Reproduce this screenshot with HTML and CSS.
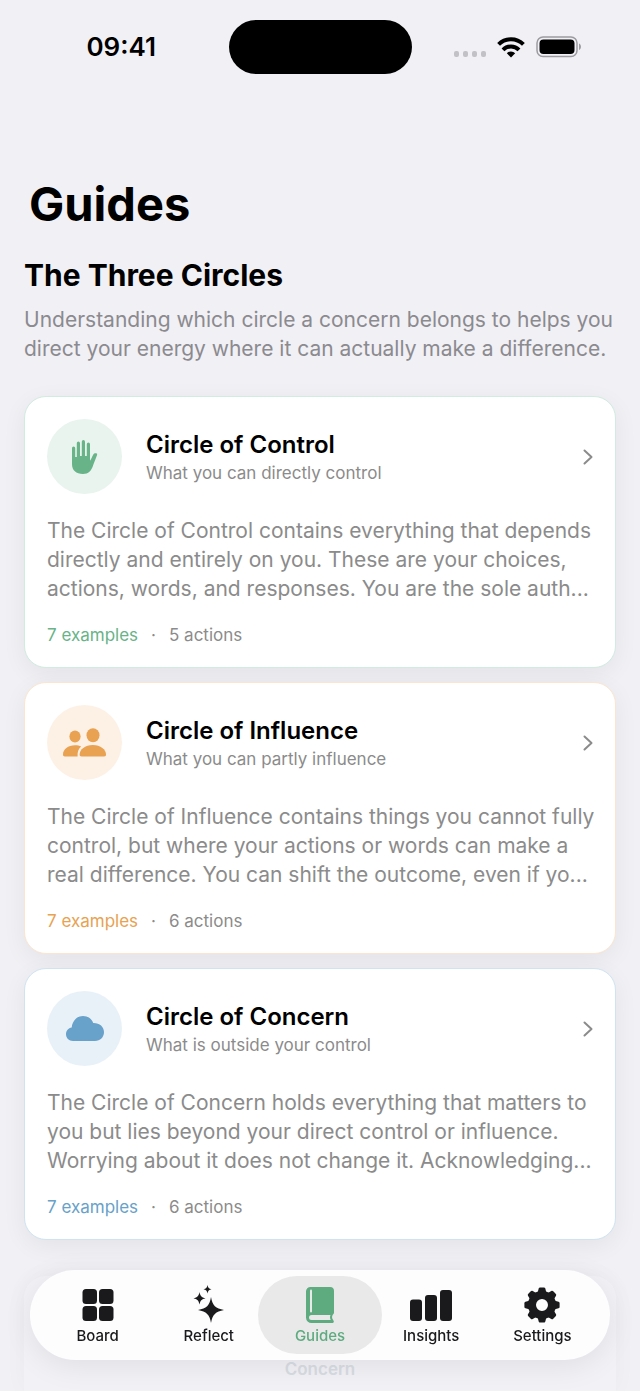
FILE: index.html
```html
<!DOCTYPE html>
<html lang="en">
<head>
    <meta charset="UTF-8">
    <meta name="viewport" content="width=device-width, initial-scale=1.0">
    <title>Guides</title>
    <link rel="stylesheet" href="styles.css">
</head>
<body>
    <header class="status-bar">
        <span class="time">09:41</span>
        <div class="island"></div>
        <div class="status-icons">
            <svg class="dots" width="32" height="6" viewBox="0 0 32 6" fill="#c2c1c6">
                <rect x="0" width="5" height="6" rx="2"/>
                <rect x="9" width="5" height="6" rx="2"/>
                <rect x="18" width="5" height="6" rx="2"/>
                <rect x="27" width="5" height="6" rx="2"/>
            </svg>
            <svg width="28" height="21" viewBox="0 0 28 21" fill="none" stroke="#000" stroke-width="4">
                <path d="M1.6 7.4a17.6 17.6 0 0 1 24.8 0"/>
                <path d="M6 12.8a11.400 11.400 0 0 1 16 0"/>
                <path d="M14 20.400l-4.200-4.200a6 6 0 0 1 8.400 0z" fill="#000" stroke="none"/>
            </svg>
            <svg width="46" height="22" viewBox="0 0 46 22">
                <rect x="1" y="1" width="40" height="19.500" rx="6" fill="none" stroke="#9c9ba0" stroke-width="1.500"/>
                <rect x="3.500" y="3.500" width="35" height="14.500" rx="4" fill="#000"/>
                <path d="M43 7.500c2.600 1 2.600 5.500 0 6.500z" fill="#9c9ba0"/>
            </svg>
        </div>
    </header>

    <main class="content">
        <h1>Guides</h1>
        <h2>The Three Circles</h2>
        <p class="intro">Understanding which circle a concern belongs to helps you direct your energy where it can actually make a difference.</p>

        <div class="cards">
            <a class="card control" href="#control">
                <div class="card-header">
                    <div class="icon">
                        <svg width="26" height="34" viewBox="0 0 26 34" fill="currentColor">
                            <path d="M0 8a1.600 1.600 0 0 1 3.200 0v9h1.600V3.200a1.600 1.600 0 0 1 3.200 0V16h1.800V1.700a1.600 1.600 0 0 1 3.200 0V16h1.800V4.200a1.600 1.600 0 0 1 3.200 0v16.600c1.200-1 2-4.200 3.300-6.200.8-1.400 2.200-1.700 3.400-1 .7.400.5 1.200.2 1.900l-3.600 9.300C19.500 31 16.300 34 11 34 4 34 0 30.300 0 24z"/>
                        </svg>
                    </div>
                    <div class="card-title">
                        <h3>Circle of Control</h3>
                        <span>What you can directly control</span>
                    </div>
                    <svg class="chevron" width="10" height="16" viewBox="0 0 10 16"><path d="M1.500 1.500L8.500 8l-7 6.500"/></svg>
                </div>
                <p>The Circle of Control contains everything that depends directly and entirely on you. These are your choices, actions, words, and responses. You are the sole auth...</p>
                <div class="meta"><span class="examples">7 examples</span><span>·</span><span>5 actions</span></div>
            </a>

            <a class="card influence" href="#influence">
                <div class="card-header">
                    <div class="icon">
                        <svg width="43" height="29" viewBox="0 0 43 29" fill="currentColor">
                            <ellipse cx="12" cy="8.500" rx="5.600" ry="6"/>
                            <ellipse cx="30" cy="7.200" rx="6.500" ry="7"/>
                            <path d="M2 28.500C.4 28.500 0 27.500 0 26.500 0 21.500 5 17.300 12 17.300c2.500 0 4.500.4 6.200 1.300-2.500 2-4 5.400-3.600 9.900z"/>
                            <path d="M18.600 28.500c-1.600 0-2-1-2-2 0-5 5.400-9.500 13.200-9.500S43 21.500 43 26.500c0 1-.4 2-2 2z"/>
                        </svg>
                    </div>
                    <div class="card-title">
                        <h3>Circle of Influence</h3>
                        <span>What you can partly influence</span>
                    </div>
                    <svg class="chevron" width="10" height="16" viewBox="0 0 10 16"><path d="M1.500 1.500L8.500 8l-7 6.500"/></svg>
                </div>
                <p>The Circle of Influence contains things you cannot fully control, but where your actions or words can make a real difference. You can shift the outcome, even if yo...</p>
                <div class="meta"><span class="examples">7 examples</span><span>·</span><span>6 actions</span></div>
            </a>

            <a class="card concern" href="#concern">
                <div class="card-header">
                    <div class="icon">
                        <svg width="38" height="25" viewBox="0 0 38 25" fill="currentColor">
                            <path d="M7 25C2.800 25 0 22 0 18.300c0-3.400 2.300-6.200 5.700-6.700C6.300 4.700 11 0 17 0c4.700 0 8.500 2.600 10.200 6.900C33.500 6.700 38 10.700 38 16c0 5.200-3.800 9-9 9z"/>
                        </svg>
                    </div>
                    <div class="card-title">
                        <h3>Circle of Concern</h3>
                        <span>What is outside your control</span>
                    </div>
                    <svg class="chevron" width="10" height="16" viewBox="0 0 10 16"><path d="M1.500 1.500L8.500 8l-7 6.500"/></svg>
                </div>
                <p>The Circle of Concern holds everything that matters to you but lies beyond your direct control or influence. Worrying about it does not change it. Acknowledging...</p>
                <div class="meta"><span class="examples">7 examples</span><span>·</span><span>6 actions</span></div>
            </a>
        </div>

        <div class="next-card">Concern</div>
    </main>

    <nav class="tab-bar">
        <a class="tab" href="#board">
            <svg width="32" height="36" viewBox="0 0 32 36" fill="currentColor">
                <rect x="0.500" y="2" width="14.500" height="15" rx="3.500"/>
                <rect x="17" y="2" width="14.500" height="15" rx="3.500"/>
                <rect x="0.500" y="19" width="14.500" height="15" rx="3.500"/>
                <rect x="17" y="19" width="14.500" height="15" rx="3.500"/>
            </svg>
            Board
        </a>
        <a class="tab" href="#reflect">
            <svg width="32" height="38" viewBox="0 0 32 38" fill="currentColor">
                <path d="M18 12c1.500 8.500 4.500 11.500 13 13-8.500 1.500-11.500 4.500-13 13-1.500-8.500-4.500-11.500-13-13 8.500-1.500 11.500-4.500 13-13z"/>
                <path d="M6.500 7c.8 4 2 5.300 6 6.300-4 1-5.200 2.300-6 6.300-.8-4-2-5.300-6-6.300 4-1 5.200-2.300 6-6.300z"/>
                <path d="M14.500 0c.5 2.800 1.400 3.600 4 4.200-2.600.6-3.500 1.400-4 4.200-.5-2.800-1.400-3.600-4-4.200 2.600-.6 3.500-1.400 4-4.200z"/>
            </svg>
            Reflect
        </a>
        <a class="tab active" href="#guides">
            <svg width="28" height="36" viewBox="0 0 28 36">
                <path d="M4.500 0H24a4 4 0 0 1 4 4v21.500c0 1-.4 1.800-1.200 2.300-1.200 2-.9 3.700.5 5.400.9 1 .7 2.800-.8 2.800H5.500A5.500 5.500 0 0 1 0 30.500V4.500A4.500 4.500 0 0 1 4.500 0z" fill="currentColor"/>
                <path d="M5 3.500v21" stroke="#e9e9ea" stroke-width="2" stroke-linecap="round"/>
                <path d="M5.500 28H24.500c-.7 1.800-.6 3.400.2 5H5.500a2.500 2.500 0 0 1 0-5z" fill="#e9e9ea"/>
            </svg>
            Guides
        </a>
        <a class="tab" href="#insights">
            <svg width="42" height="36" viewBox="0 0 42 36" fill="currentColor">
                <rect x="0" y="12.500" width="12" height="21.500" rx="3"/>
                <rect x="15" y="8" width="12" height="26" rx="3"/>
                <rect x="30" y="3" width="12" height="31" rx="3"/>
            </svg>
            Insights
        </a>
        <a class="tab" href="#settings">
            <svg width="36" height="36" viewBox="0 0 36 36" fill="currentColor">
                <circle cx="18" cy="18" r="10" fill="none" stroke="currentColor" stroke-width="8"/>
                <g id="teeth">
                    <path id="tooth" d="M13.500 6l1.200-4.500C15 .6 15.600.4 16.300.4h3.400c.7 0 1.300.2 1.600 1.100L22.500 6z"/>
                    <use href="#tooth" transform="rotate(45 18 18)"/>
                    <use href="#tooth" transform="rotate(90 18 18)"/>
                    <use href="#tooth" transform="rotate(135 18 18)"/>
                </g>
                <use href="#teeth" transform="rotate(180 18 18)"/>
            </svg>
            Settings
        </a>
    </nav>
</body>
</html>
```
FILE: styles.css
```css
* {
    box-sizing: border-box;
}
body {
    font-family: Inter, "Liberation Sans", sans-serif;
    margin: 0;
    min-height: 100vh;
    display: flex;
    flex-direction: column;
    background-color: #f1f0f5;
    color: #000;
}
h1, h2, h3, p {
    margin: 0;
}
a {
    color: inherit;
    text-decoration: none;
}
.status-bar {
    display: grid;
    grid-template-columns: 1fr 183px 1fr;
    align-items: center;
    padding-top: 20px;
}
.time {
    font-size: 26px;
    font-weight: 600;
    line-height: 30px;
    text-align: center;
    padding-left: 14px;
}
.island {
    height: 54px;
    border-radius: 27px;
    background-color: #000;
}
.status-icons {
    display: flex;
    align-items: center;
    justify-content: center;
    gap: 11px;
    padding-right: 16px;
}
.dots {
    margin-top: 14px;
}
.content {
    flex: 1;
    display: flex;
    flex-direction: column;
    padding: 100px 24px 0;
}
h1 {
    font-size: 47px;
    line-height: 60px;
    padding-left: 5px;
}
h2 {
    font-size: 30px;
    line-height: 40px;
    margin-top: 21px;
}
.intro {
    font-size: 21px;
    line-height: 29px;
    color: #8b8a8f;
    margin-top: 10px;
}
.cards {
    display: flex;
    flex-direction: column;
    gap: 14px;
    margin-top: 33px;
}
.card {
    display: flex;
    flex-direction: column;
    gap: 22px;
    padding: 22px 22px 21px;
    border: 1px solid;
    border-radius: 22px;
    background-color: #fff;
    box-shadow: 0 6px 24px rgba(0, 0, 0, 0.06);
}
.card-header {
    display: flex;
    align-items: center;
    gap: 24px;
}
.icon {
    width: 75px;
    height: 75px;
    border-radius: 50%;
    display: flex;
    align-items: center;
    justify-content: center;
}
.card-title {
    flex: 1;
    color: #8b8b8b;
    font-size: 17px;
    line-height: 24px;
}
h3 {
    color: #000;
    font-size: 24px;
    font-weight: 600;
    line-height: 32px;
}
.chevron {
    fill: none;
    stroke: #8b8b8b;
    stroke-width: 2;
    stroke-linecap: round;
    stroke-linejoin: round;
}
.card p {
    color: #8b8b8b;
    font-size: 21px;
    line-height: 29px;
    margin-right: -10px;
}
.meta {
    display: flex;
    gap: 13px;
    color: #8b8b8b;
    font-size: 17px;
    line-height: 21px;
}
.control {
    border-color: #d0ebdf;
}
.control .icon {
    background-color: #e9f4ee;
    color: #68b388;
}
.control .examples {
    color: #68b388;
}
.influence {
    border-color: #fae6d0;
}
.influence .icon {
    background-color: #fdf1e6;
    color: #e8a252;
}
.influence .examples {
    color: #e8a252;
}
.concern {
    border-color: #cfe4f1;
}
.concern .icon {
    background-color: #e9f1f8;
    color: #68a1c9;
}
.concern .examples {
    color: #68a1c9;
}
/* next section, fading out behind the tab bar */
.next-card {
    flex: 1;
    display: flex;
    align-items: flex-end;
    justify-content: center;
    min-height: 110px;
    margin-top: 36px;
    padding-bottom: 11px;
    border-radius: 22px 22px 0 0;
    color: #d8dce3;
    font-size: 17px;
    font-weight: 600;
    line-height: 22px;
    background-color: rgba(255, 255, 255, 0.1);
    box-shadow: 0 0 24px rgba(0, 0, 0, 0.03);
}
.tab-bar {
    position: fixed;
    left: 30px;
    right: 30px;
    bottom: 31px;
    display: flex;
    padding: 6px 12px;
    border-radius: 45px;
    background-color: #fdfdfe;
    box-shadow: 0 6px 30px rgba(0, 0, 0, 0.08);
}
.tab {
    flex: 1;
    display: flex;
    flex-direction: column;
    align-items: center;
    justify-content: flex-end;
    gap: 3px;
    height: 78px;
    padding-bottom: 8px;
    border-radius: 39px;
    color: #1a1a1c;
    font-size: 15px;
    font-weight: 500;
    line-height: 20px;
}
.tab.active {
    margin: 0 -6px;
    padding-left: 6px;
    padding-right: 6px;
    background-color: #e9e9ea;
    color: #5eab7f;
}
```
